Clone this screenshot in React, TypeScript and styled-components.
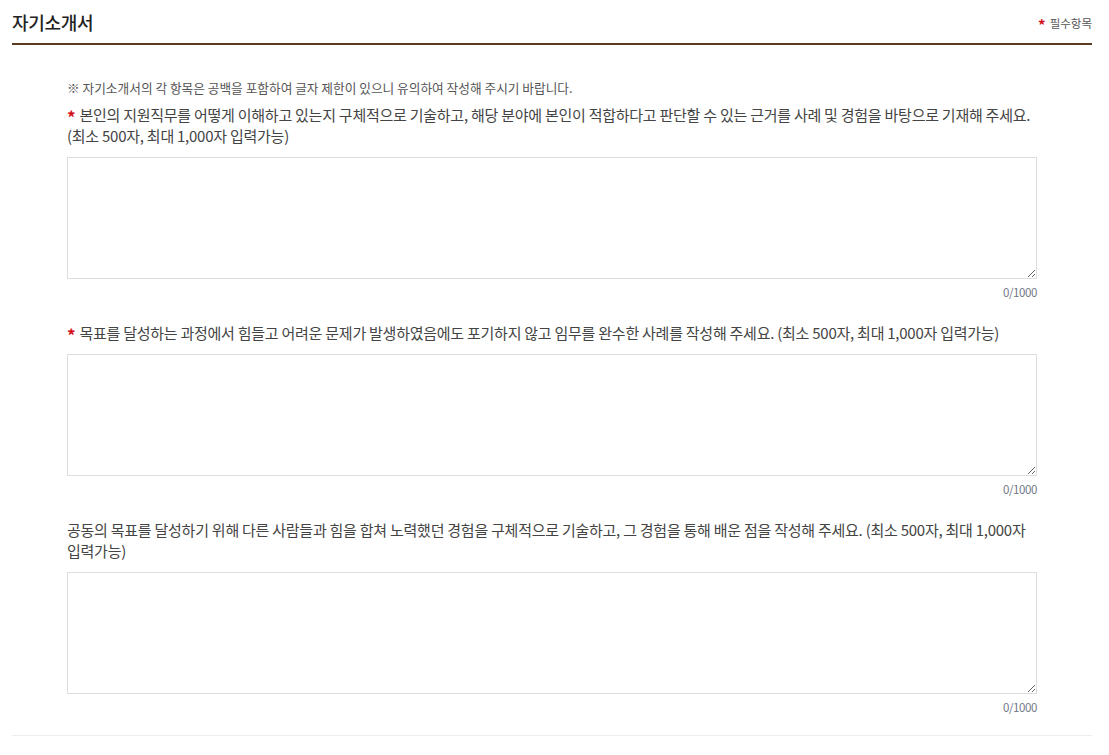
import React, { useState } from "react";
import styled, { createGlobalStyle } from "styled-components";

const GlobalStyle = createGlobalStyle`
  body {
    margin: 0;
    background: #fff;
    font-family: "Noto Sans CJK KR", "Noto Sans", sans-serif;
    color: #444;
  }
`;

const Page = styled.div`
  padding: 0 17px 0 12px;
`;

const Header = styled.div`
  display: flex;
  justify-content: space-between;
  align-items: flex-end;
  height: 45px;
  border-bottom: 2px solid #5b3a1f;
  box-sizing: border-box;
  padding-bottom: 8px;
`;

const Title = styled.h2`
  margin: 0;
  font-size: 18px;
  font-weight: 500;
  color: #222;
  letter-spacing: -0.3px;
`;

const Required = styled.span`
  font-size: 11.5px;
  color: #555;
  padding-bottom: 3px;
`;

const Star = styled.span<{ $size?: number }>`
  display: inline-block;
  color: #d3101a;
  font-weight: 700;
  font-size: ${(p) => p.$size ?? 17}px;
  line-height: 1;
  margin-right: 4px;
  vertical-align: -3px;
`;

const Body = styled.div`
  padding: 34px 55px 19px;
  border-bottom: 1px solid #eee;
`;

const Notice = styled.p`
  margin: 0 0 8px;
  font-size: 12.7px;
  line-height: 17px;
  color: #555;
`;

const Item = styled.div`
  margin-bottom: 21px;
  &:last-child {
    margin-bottom: 0;
  }
`;

const Question = styled.p`
  margin: 0 0 11px;
  font-size: 15px;
  line-height: 21px;
  color: #444;
  letter-spacing: -0.25px;
  word-break: keep-all;
`;

const Field = styled.textarea`
  display: block;
  width: 100%;
  height: 122px;
  box-sizing: border-box;
  border: 1px solid #ddd;
  resize: vertical;
  padding: 8px;
  font-family: inherit;
  font-size: 14px;
  outline: none;
`;

const Counter = styled.div`
  text-align: right;
  margin-top: 5px;
  font-size: 11.5px;
  line-height: 17px;
  color: #6f7684;
  letter-spacing: -0.4px;
`;

interface Q {
  text: string;
  required: boolean;
}

const questions: Q[] = [
  {
    required: true,
    text:
      "본인의 지원직무를 어떻게 이해하고 있는지 구체적으로 기술하고, 해당 분야에 본인이 적합하다고 판단할 수 있는 근거를 사례 및 경험을 바탕으로 기재해 주세요. (최소 500자, 최대 1,000자 입력가능)",
  },
  {
    required: true,
    text:
      "목표를 달성하는 과정에서 힘들고 어려운 문제가 발생하였음에도 포기하지 않고 임무를 완수한 사례를 작성해 주세요. (최소 500자, 최대 1,000자 입력가능)",
  },
  {
    required: false,
    text:
      "공동의 목표를 달성하기 위해 다른 사람들과 힘을 합쳐 노력했던 경험을 구체적으로 기술하고, 그 경험을 통해 배운 점을 작성해 주세요. (최소 500자, 최대 1,000자 입력가능)",
  },
];

const Essay: React.FC<{ q: Q }> = ({ q }) => {
  const [value, setValue] = useState("");
  return (
    <Item>
      <Question>
        {q.required && <Star>*</Star>}
        {q.text}
      </Question>
      <Field value={value} maxLength={1000} onChange={(e) => setValue(e.target.value)} />
      <Counter>{value.length}/1000</Counter>
    </Item>
  );
};

export default function App() {
  return (
    <Page>
      <GlobalStyle />
      <Header>
        <Title>자기소개서</Title>
        <Required>
          <Star $size={15}>*</Star>필수항목
        </Required>
      </Header>
      <Body>
        <Notice>※ 자기소개서의 각 항목은 공백을 포함하여 글자 제한이 있으니 유의하여 작성해 주시기 바랍니다.</Notice>
        {questions.map((q, i) => (
          <Essay key={i} q={q} />
        ))}
      </Body>
    </Page>
  );
}
